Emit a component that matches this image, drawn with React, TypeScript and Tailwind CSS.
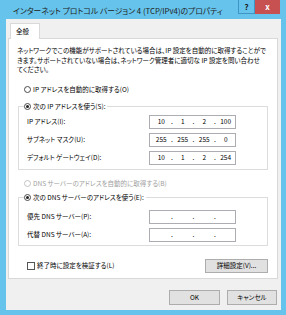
import React from 'react';

const FONT = { fontFamily: '"Noto Sans CJK JP", "Noto Sans", sans-serif', fontFeatureSettings: '"palt"' };

const Radio = ({ checked, disabled, label }: { checked?: boolean; disabled?: boolean; label: string }) => (
  <div className={`flex items-center h-[10px] ${disabled ? 'text-[#a0a0a0]' : 'text-black'}`}>
    <span
      className={`w-[7px] h-[7px] rounded-full border flex items-center justify-center bg-white ${
        disabled ? 'border-[#c4c4c4]' : 'border-[#4a4a4a]'
      }`}
    >
      {checked && <span className="w-[3px] h-[3px] rounded-full bg-[#222]" />}
    </span>
    <span className="ml-[2px] whitespace-nowrap">{label}</span>
  </div>
);

const IpField = ({ parts }: { parts: string[] }) => (
  <div className="w-[87px] h-[14px] border border-[#abadb3] bg-white flex items-center pl-[2px]">
    {[0, 1, 2, 3].map(i => (
      <React.Fragment key={i}>
        <span className="w-[19px] text-center">{parts[i] ?? ''}</span>
        {i < 3 && <span className="w-[3px] text-center">.</span>}
      </React.Fragment>
    ))}
  </div>
);

const Row = ({ label, parts }: { label: string; parts: string[] }) => (
  <div className="flex items-center h-[14px] pl-[8px]">
    <span className="w-[122px] whitespace-nowrap">{label}</span>
    <IpField parts={parts} />
  </div>
);

export default function App() {
  return (
    <div className="w-[286px] h-[315px] bg-[#66c4ec] flex flex-col overflow-hidden" style={FONT}>
      {/* Title bar */}
      <div className="h-[19px] flex items-start">
        <div className="flex-1 pl-[13px] pt-[5px] text-[7.8px] leading-[12px] text-[#222] whitespace-nowrap">
          インターネット プロトコル バージョン 4 (TCP/IPv4)のプロパティ
        </div>
        <div className="w-[17px] h-[14px] border border-[#3f95c4] border-t-0 flex items-center justify-center text-[8px] font-bold text-[#1a1a1a]">
          ?
        </div>
        <div className="w-[25px] h-[14px] mr-[6px] bg-[#c75050] flex items-center justify-center text-[8px] font-bold text-white">
          x
        </div>
      </div>

      {/* Client area */}
      <div className="h-[291px] ml-[6px] mr-[5px] bg-[#f0f0f0] flex flex-col text-[6.5px] leading-[9.5px] text-black">
        <div className="pt-[4px] pl-[4px] flex">
          <div className="relative z-10 -mb-px w-[30px] h-[16px] bg-white border border-b-0 border-[#d9d9d9] flex items-center pl-[5px] text-[6.5px]">
            全般
          </div>
        </div>

        <div className="ml-[2px] mr-[3px] h-[241px] bg-white border border-[#d9d9d9] pl-[8px] pr-[9px] pt-[7px] flex flex-col">
          <p className="whitespace-nowrap">
            ネットワークでこの機能がサポートされている場合は、IP 設定を自動的に取得することがで
            <br />
            きます。サポートされていない場合は、ネットワーク管理者に適切な IP 設定を問い合わせ
            <br />
            てください。
          </p>

          <div className="mt-[10px] pl-[7px]">
            <Radio label="IP アドレスを自動的に取得する(O)" />
          </div>

          <fieldset className="mt-[7px] ml-[1px] w-[250px] border border-[#dcdcdc] pb-[4px]">
            <legend className="ml-[5px] pr-[2px] bg-white">
              <Radio checked label="次の IP アドレスを使う(S):" />
            </legend>
            <div className="pt-[3px] flex flex-col gap-[4px]">
              <Row label="IP アドレス(I):" parts={['10', '1', '2', '100']} />
              <Row label="サブネット マスク(U):" parts={['255', '255', '255', '0']} />
              <Row label="デフォルト ゲートウェイ(D):" parts={['10', '1', '2', '254']} />
            </div>
          </fieldset>

          <div className="mt-[9px] pl-[7px]">
            <Radio disabled label="DNS サーバーのアドレスを自動的に取得する(B)" />
          </div>

          <fieldset className="mt-[4px] ml-[1px] w-[250px] border border-[#dcdcdc] pb-[3px]">
            <legend className="ml-[5px] pr-[2px] bg-white">
              <Radio checked label="次の DNS サーバーのアドレスを使う(E):" />
            </legend>
            <div className="pt-[7px] flex flex-col gap-[4px]">
              <Row label="優先 DNS サーバー(P):" parts={[]} />
              <Row label="代替 DNS サーバー(A):" parts={[]} />
            </div>
          </fieldset>

          <div className="mt-[13px] h-[14px] flex items-center justify-between pl-[10px]">
            <div className="flex items-center">
              <span className="w-[8px] h-[8px] border border-[#555] bg-white" />
              <span className="ml-[2px]">終了時に設定を検証する(L)</span>
            </div>
            <button className="w-[63px] h-[14px] bg-[#e1e1e1] border border-[#adadad] text-[6.5px] leading-none">
              詳細設定(V)...
            </button>
          </div>
        </div>

        <div className="mt-[11px] pr-[4px] flex justify-end gap-[7px]">
          <button className="w-[51px] h-[15px] bg-[#e1e1e1] border border-[#adadad] text-[6.5px] leading-none">
            OK
          </button>
          <button className="w-[50px] h-[15px] bg-[#e1e1e1] border border-[#adadad] text-[6.5px] leading-none">
            キャンセル
          </button>
        </div>
      </div>
    </div>
  );
}
